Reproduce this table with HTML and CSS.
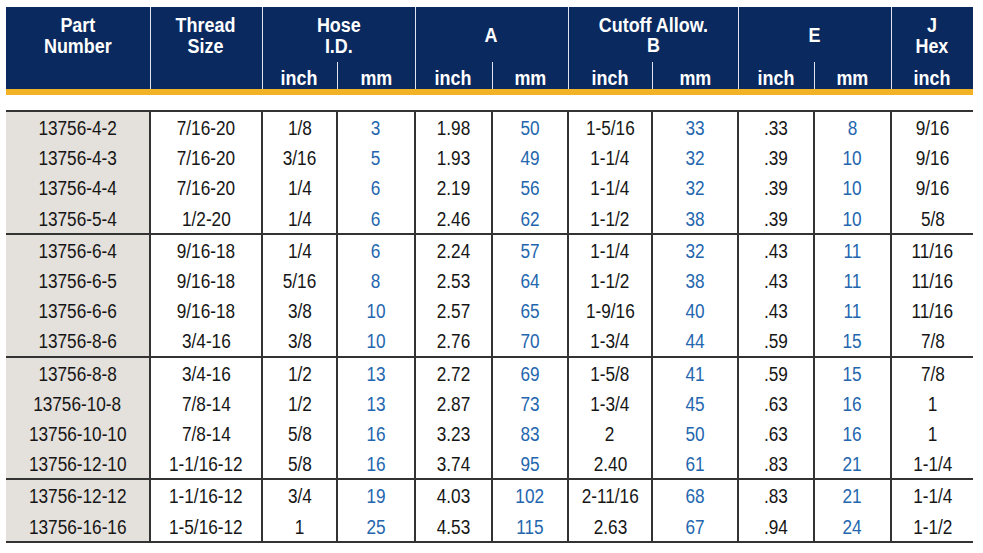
FILE: index.html
```html
<!DOCTYPE html>
<html>
<head>
<meta charset="utf-8">
<link rel="stylesheet" href="styles.css">
</head>
<body>
<table class="spec">
  <colgroup>
    <col class="c-part"><col class="c-thread"><col class="c-hi"><col class="c-hm"><col class="c-ai"><col class="c-am"><col class="c-bi"><col class="c-bm"><col class="c-ei"><col class="c-em"><col class="c-j">
  </colgroup>
  <thead>
    <tr class="h1">
      <th><span>Part<br>Number</span></th>
      <th><span>Thread<br>Size</span></th>
      <th colspan="2"><span>Hose<br>I.D.</span></th>
      <th colspan="2"><span>A</span></th>
      <th colspan="2" class="tight"><span>Cutoff Allow.<br>B</span></th>
      <th colspan="2"><span>E</span></th>
      <th><span>J<br>Hex</span></th>
    </tr>
    <tr class="h2">
      <th></th>
      <th></th>
      <th><span>inch</span></th><th class="sub"><span>mm</span></th>
      <th><span>inch</span></th><th class="sub"><span>mm</span></th>
      <th><span>inch</span></th><th class="sub"><span>mm</span></th>
      <th><span>inch</span></th><th class="sub"><span>mm</span></th>
      <th><span>inch</span></th>
    </tr>
    <tr class="gap"><td colspan="11"></td></tr>
  </thead>
  <tbody class="grp">
    <tr><td class="pn"><span>13756-4-2</span></td><td><span>7/16-20</span></td><td><span>1/8</span></td><td class="mm"><span>3</span></td><td><span>1.98</span></td><td class="mm"><span>50</span></td><td><span>1-5/16</span></td><td class="mm"><span>33</span></td><td><span>.33</span></td><td class="mm"><span>8</span></td><td><span>9/16</span></td></tr>
    <tr><td class="pn"><span>13756-4-3</span></td><td><span>7/16-20</span></td><td><span>3/16</span></td><td class="mm"><span>5</span></td><td><span>1.93</span></td><td class="mm"><span>49</span></td><td><span>1-1/4</span></td><td class="mm"><span>32</span></td><td><span>.39</span></td><td class="mm"><span>10</span></td><td><span>9/16</span></td></tr>
    <tr><td class="pn"><span>13756-4-4</span></td><td><span>7/16-20</span></td><td><span>1/4</span></td><td class="mm"><span>6</span></td><td><span>2.19</span></td><td class="mm"><span>56</span></td><td><span>1-1/4</span></td><td class="mm"><span>32</span></td><td><span>.39</span></td><td class="mm"><span>10</span></td><td><span>9/16</span></td></tr>
    <tr><td class="pn"><span>13756-5-4</span></td><td><span>1/2-20</span></td><td><span>1/4</span></td><td class="mm"><span>6</span></td><td><span>2.46</span></td><td class="mm"><span>62</span></td><td><span>1-1/2</span></td><td class="mm"><span>38</span></td><td><span>.39</span></td><td class="mm"><span>10</span></td><td><span>5/8</span></td></tr>
  </tbody>
  <tbody class="grp">
    <tr><td class="pn"><span>13756-6-4</span></td><td><span>9/16-18</span></td><td><span>1/4</span></td><td class="mm"><span>6</span></td><td><span>2.24</span></td><td class="mm"><span>57</span></td><td><span>1-1/4</span></td><td class="mm"><span>32</span></td><td><span>.43</span></td><td class="mm"><span>11</span></td><td><span>11/16</span></td></tr>
    <tr><td class="pn"><span>13756-6-5</span></td><td><span>9/16-18</span></td><td><span>5/16</span></td><td class="mm"><span>8</span></td><td><span>2.53</span></td><td class="mm"><span>64</span></td><td><span>1-1/2</span></td><td class="mm"><span>38</span></td><td><span>.43</span></td><td class="mm"><span>11</span></td><td><span>11/16</span></td></tr>
    <tr><td class="pn"><span>13756-6-6</span></td><td><span>9/16-18</span></td><td><span>3/8</span></td><td class="mm"><span>10</span></td><td><span>2.57</span></td><td class="mm"><span>65</span></td><td><span>1-9/16</span></td><td class="mm"><span>40</span></td><td><span>.43</span></td><td class="mm"><span>11</span></td><td><span>11/16</span></td></tr>
    <tr><td class="pn"><span>13756-8-6</span></td><td><span>3/4-16</span></td><td><span>3/8</span></td><td class="mm"><span>10</span></td><td><span>2.76</span></td><td class="mm"><span>70</span></td><td><span>1-3/4</span></td><td class="mm"><span>44</span></td><td><span>.59</span></td><td class="mm"><span>15</span></td><td><span>7/8</span></td></tr>
  </tbody>
  <tbody class="grp">
    <tr><td class="pn"><span>13756-8-8</span></td><td><span>3/4-16</span></td><td><span>1/2</span></td><td class="mm"><span>13</span></td><td><span>2.72</span></td><td class="mm"><span>69</span></td><td><span>1-5/8</span></td><td class="mm"><span>41</span></td><td><span>.59</span></td><td class="mm"><span>15</span></td><td><span>7/8</span></td></tr>
    <tr><td class="pn"><span>13756-10-8</span></td><td><span>7/8-14</span></td><td><span>1/2</span></td><td class="mm"><span>13</span></td><td><span>2.87</span></td><td class="mm"><span>73</span></td><td><span>1-3/4</span></td><td class="mm"><span>45</span></td><td><span>.63</span></td><td class="mm"><span>16</span></td><td><span>1</span></td></tr>
    <tr><td class="pn"><span>13756-10-10</span></td><td><span>7/8-14</span></td><td><span>5/8</span></td><td class="mm"><span>16</span></td><td><span>3.23</span></td><td class="mm"><span>83</span></td><td><span>2</span></td><td class="mm"><span>50</span></td><td><span>.63</span></td><td class="mm"><span>16</span></td><td><span>1</span></td></tr>
    <tr><td class="pn"><span>13756-12-10</span></td><td><span>1-1/16-12</span></td><td><span>5/8</span></td><td class="mm"><span>16</span></td><td><span>3.74</span></td><td class="mm"><span>95</span></td><td><span>2.40</span></td><td class="mm"><span>61</span></td><td><span>.83</span></td><td class="mm"><span>21</span></td><td><span>1-1/4</span></td></tr>
  </tbody>
  <tbody class="grp last">
    <tr><td class="pn"><span>13756-12-12</span></td><td><span>1-1/16-12</span></td><td><span>3/4</span></td><td class="mm"><span>19</span></td><td><span>4.03</span></td><td class="mm"><span>102</span></td><td><span>2-11/16</span></td><td class="mm"><span>68</span></td><td><span>.83</span></td><td class="mm"><span>21</span></td><td><span>1-1/4</span></td></tr>
    <tr><td class="pn"><span>13756-16-16</span></td><td><span>1-5/16-12</span></td><td><span>1</span></td><td class="mm"><span>25</span></td><td><span>4.53</span></td><td class="mm"><span>115</span></td><td><span>2.63</span></td><td class="mm"><span>67</span></td><td><span>.94</span></td><td class="mm"><span>24</span></td><td><span>1-1/2</span></td></tr>
  </tbody>
</table>
</body>
</html>
```

FILE: styles.css
```css
html, body {
  margin: 0;
  padding: 0;
  background: #ffffff;
}

body {
  padding: 7px 0 0 6px;
}

.spec {
  border-collapse: collapse;
  table-layout: fixed;
  width: 967px;
  font-family: "Liberation Sans", Arial, sans-serif;
}

.spec span {
  display: inline-block;
}

.c-part { width: 144px; }
.c-thread { width: 112px; }
.c-hi { width: 75px; }
.c-hm { width: 78px; }
.c-ai { width: 77px; }
.c-am { width: 76px; }
.c-bi { width: 84px; }
.c-bm { width: 86px; }
.c-ei { width: 76px; }
.c-em { width: 77px; }
.c-j { width: 82px; }

.spec th {
  background: #0a2a5f;
  color: #ffffff;
  font-weight: bold;
  font-size: 19.5px;
  text-align: center;
  padding: 0;
  border-left: 1.5px solid #dfe4ee;
  border-right: 1.5px solid #dfe4ee;
}

.spec th span {
  transform: scaleX(0.92);
}

.spec th:first-child {
  border-left: none;
}

.spec th:last-child {
  border-right: none;
}

.h1 th {
  height: 55px;
  line-height: 21px;
  vertical-align: middle;
}

.h1 th span {
  margin-top: 2px;
}

.h1 th.tight span {
  line-height: 20px;
}

.h2 th {
  height: 27px;
  line-height: 20px;
  vertical-align: bottom;
  border-bottom: 6px solid #f1b325;
}

.h2 th span {
  padding-bottom: 1px;
}

.h2 th.sub {
  border-left: 1.5px solid #dfe4ee;
}

.gap td {
  height: 15px;
  padding: 0;
  border: none;
}

.grp td {
  height: 30.2px;
  padding: 0;
  text-align: center;
  font-size: 20px;
  line-height: 22px;
  color: #161616;
  border-left: 2px solid #333333;
  border-right: 2px solid #333333;
  vertical-align: middle;
}

.grp td span {
  transform: scaleX(0.86);
  padding-top: 2px;
}

.grp td:first-child {
  border-left: none;
}

.grp td:last-child {
  border-right: none;
}

.grp tr:first-child td {
  border-top: 2px solid #333333;
}

.grp.last tr:last-child td {
  border-bottom: 2px solid #333333;
}

.grp td.pn {
  background: #e4e0db;
}

.grp td.mm {
  color: #2466ae;
}
```
